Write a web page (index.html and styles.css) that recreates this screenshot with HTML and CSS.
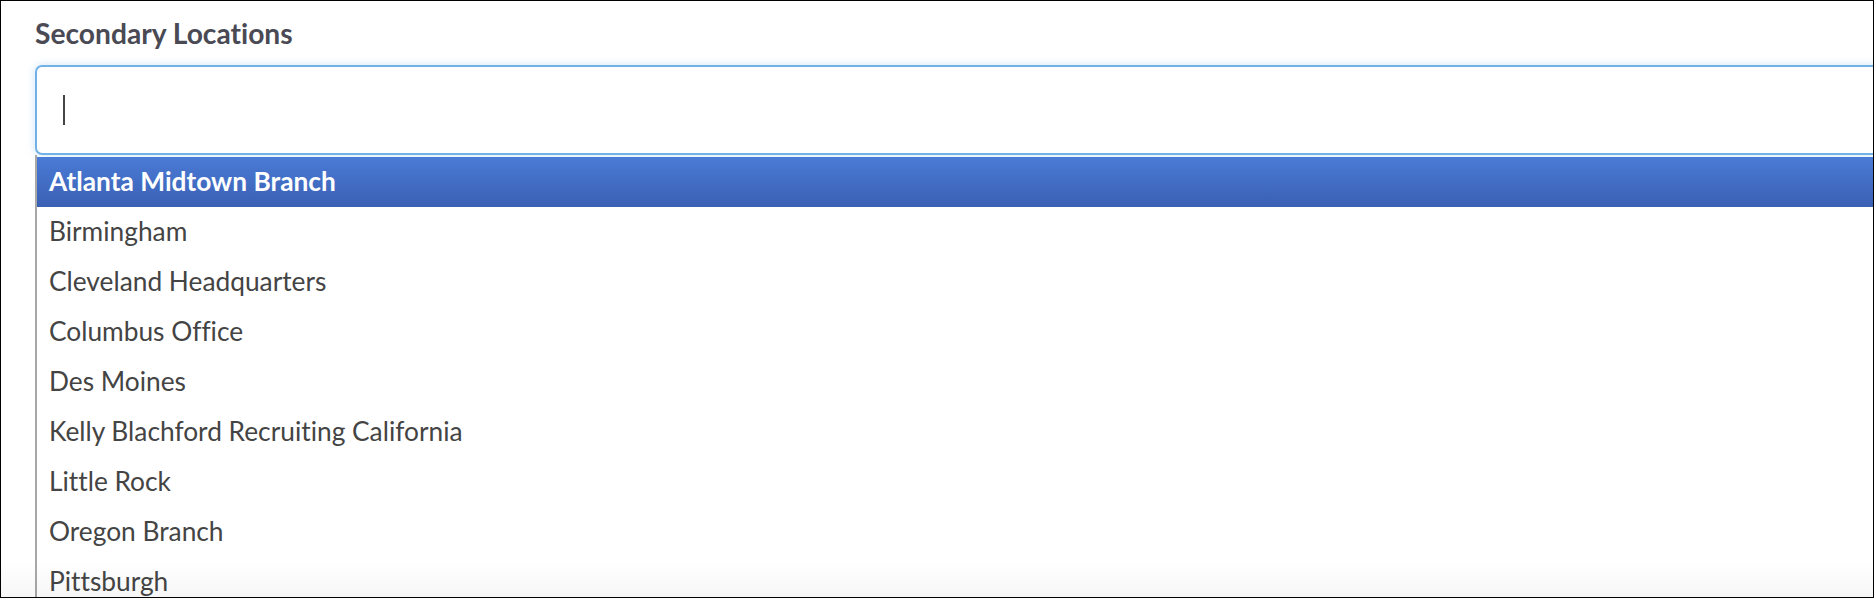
FILE: index.html
```html
<!DOCTYPE html>
<html>
<head>
<meta charset="utf-8">
<link rel="stylesheet" href="styles.css">
</head>
<body>
<div class="frame">
  <div class="field">
    <label class="label">Secondary Locations</label>
    <div class="combo">
      <div class="input"><span class="caret"></span></div>
      <ul class="menu">
        <li class="item active">Atlanta Midtown Branch</li>
        <li class="item">Birmingham</li>
        <li class="item">Cleveland Headquarters</li>
        <li class="item">Columbus Office</li>
        <li class="item">Des Moines</li>
        <li class="item">Kelly Blachford Recruiting California</li>
        <li class="item">Little Rock</li>
        <li class="item">Oregon Branch</li>
        <li class="item">Pittsburgh</li>
      </ul>
    </div>
  </div>
  <div class="fade"></div>
</div>
</body>
</html>
```
FILE: styles.css
```css
html, body {
  margin: 0;
  padding: 0;
  background: #fff;
}
.frame {
  position: relative;
  width: 1874px;
  height: 598px;
  box-sizing: border-box;
  border: 1px solid #000;
  overflow: hidden;
  background: #fff;
  font-family: Lato, "Open Sans", sans-serif;
  font-variant-ligatures: none;
}
.field {
  display: flex;
  flex-direction: column;
  padding: 17px 0 0 34px;
}
.label {
  font-size: 28.2px;
  font-weight: 700;
  color: #4a4a55;
  line-height: 30px;
  height: 47px;
}
.combo {
  width: 1900px;
  display: flex;
  flex-direction: column;
}
.input {
  height: 86px;
  border: 2px solid #72b1e6;
  border-radius: 7px;
  box-shadow: 0 0 8px rgba(114, 177, 230, 0.35);
  display: flex;
  align-items: center;
  padding-left: 26px;
  background: #fff;
}
.caret {
  width: 2px;
  height: 30px;
  background: #444;
}
.menu {
  list-style: none;
  margin: 0;
  padding: 2px 0 0 0;
  border-left: 2px solid #a8a8a8;
  font-size: 26.3px;
  color: #444;
}
.item {
  height: 50px;
  line-height: 48px;
  box-sizing: border-box;
  padding-left: 12px;
  padding-bottom: 2px;
}
.item.active {
  background: linear-gradient(#4a7bd6, #3a60b3);
  color: #fff;
  font-weight: 700;
}
.fade {
  position: absolute;
  left: 0;
  right: 0;
  bottom: 0;
  height: 36px;
  background: linear-gradient(rgba(0,0,0,0), rgba(0,0,0,0.035));
  pointer-events: none;
}
```
